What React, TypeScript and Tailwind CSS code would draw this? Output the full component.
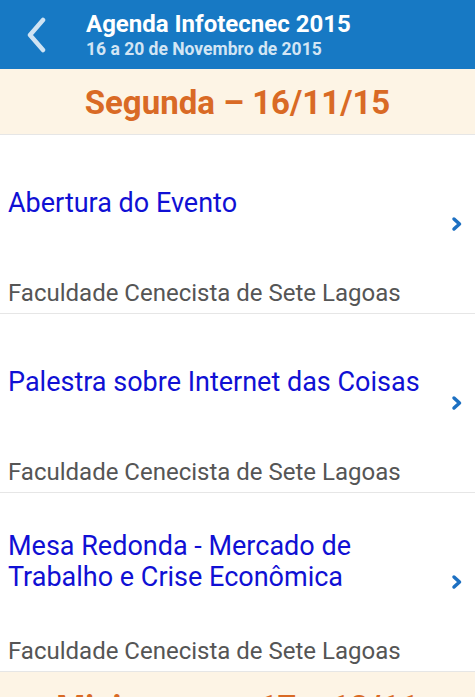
import React from 'react';

const items = [
  { title: 'Abertura do Evento', place: 'Faculdade Cenecista de Sete Lagoas' },
  { title: 'Palestra sobre Internet das Coisas', place: 'Faculdade Cenecista de Sete Lagoas' },
  { title: 'Mesa Redonda - Mercado de Trabalho e Crise Econômica', place: 'Faculdade Cenecista de Sete Lagoas' },
];

function DayHeader({ label }: { label: string }) {
  return (
    <div className="h-[66px] bg-[#fdf4e5] border-b border-[#e6e6e6] flex items-center justify-center pt-[3px]">
      <span className="text-[33px] leading-[40px] font-bold text-[#d96a25]">{label}</span>
    </div>
  );
}

export default function App() {
  return (
    <div className="w-[475px] h-[697px] overflow-hidden bg-white" style={{ fontFamily: 'Roboto, "Noto Sans", sans-serif' }}>
      {/* Top bar */}
      <div className="h-[69px] bg-[#1779c4] flex items-center">
        <div className="w-[86px] flex items-center pl-[25px]">
          <svg width="22" height="36" viewBox="0 0 22 36">
            <polyline points="18,3 5,18 18,33" fill="none" stroke="#cfe3f3" strokeWidth="4.5" strokeLinecap="round" strokeLinejoin="round" />
          </svg>
        </div>
        <div className="flex flex-col">
          <span className="text-[24px] leading-[28px] font-bold text-white">Agenda Infotecnec 2015</span>
          <span className="text-[17.5px] leading-[22px] font-bold text-[#d2e5f4]">16 a 20 de Novembro de 2015</span>
        </div>
      </div>

      <DayHeader label="Segunda – 16/11/15" />

      {items.map((it) => (
        <div key={it.title} className="h-[179px] flex items-center border-b border-[#e6e6e6]">
          <div className="flex-1 h-full flex flex-col pl-2 pr-4">
            <div className="flex-1 flex items-center pb-[7px]">
              <span className="text-[27px] leading-[31px] text-[#1010d4]">{it.title}</span>
            </div>
            <span className="text-[24px] leading-[28px] text-[#555555] pb-[6px]">{it.place}</span>
          </div>
          <div className="w-[24px] flex items-center pr-[12px] -ml-[12px]">
            <svg width="12" height="16" viewBox="0 0 12 16">
              <polyline points="3,3 8.5,8 3,13" fill="none" stroke="#1d70c2" strokeWidth="3.5" strokeLinecap="round" strokeLinejoin="round" />
            </svg>
          </div>
        </div>
      ))}

      <div className="h-[66px] bg-[#fdf4e5] flex items-start justify-center pt-[16px]">
        <span className="text-[33px] leading-[40px] font-bold text-[#d96a25]">Minicursos – 17 e 18/11</span>
      </div>
    </div>
  );
}
